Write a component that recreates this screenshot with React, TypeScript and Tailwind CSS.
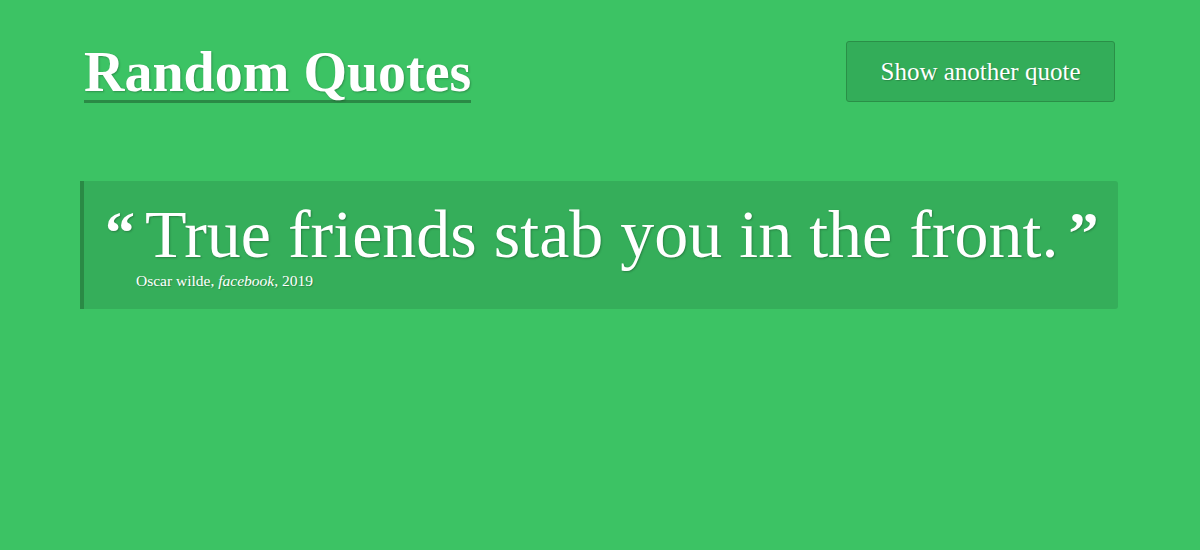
export default function App() {
  return (
    <div className="min-h-[550px] w-full bg-[#3cc364] font-['Liberation_Serif',serif] text-white">
      <div className="mx-auto w-[1040px] pt-[41px]">
        {/* header */}
        <div className="flex items-start justify-between">
          <h1 className="ml-[4px] mt-[4px] border-b-[3px] border-[#2a8a45] text-[56px] font-bold leading-[55px] [text-shadow:1px_1px_2px_rgba(0,0,0,0.25)]">
            Random Quotes
          </h1>
          <button className="mr-[5px] h-[61px] w-[269px] rounded-[3px] border border-[#2a8f47] bg-[#33ad59] text-[25px] [text-shadow:1px_1px_1px_rgba(0,0,0,0.2)]">
            Show another quote
          </button>
        </div>

        {/* quote */}
        <div className="mt-[78px] w-[1038px] rounded-r-[3px] border-l-4 border-[#2a8a45] bg-[#35ae5a] pb-[18px] pl-[21px] pt-[19px]">
          <div className="flex items-start [text-shadow:1px_1px_2px_rgba(0,0,0,0.25)]">
            <span className="mr-[10px] mt-[3px] text-[60px] font-bold leading-[60px]">“</span>
            <span className="whitespace-nowrap text-[68px] leading-[68px]">True friends stab you in the front.</span>
            <span className="ml-[10px] mt-[3px] text-[60px] font-bold leading-[60px]">”</span>
          </div>
          <p className="mt-[3px] pl-[31px] text-[15.5px] leading-[20px] [text-shadow:1px_1px_1px_rgba(0,0,0,0.2)]">
            Oscar wilde, <i>facebook</i>, 2019
          </p>
        </div>
      </div>
    </div>
  );
}
